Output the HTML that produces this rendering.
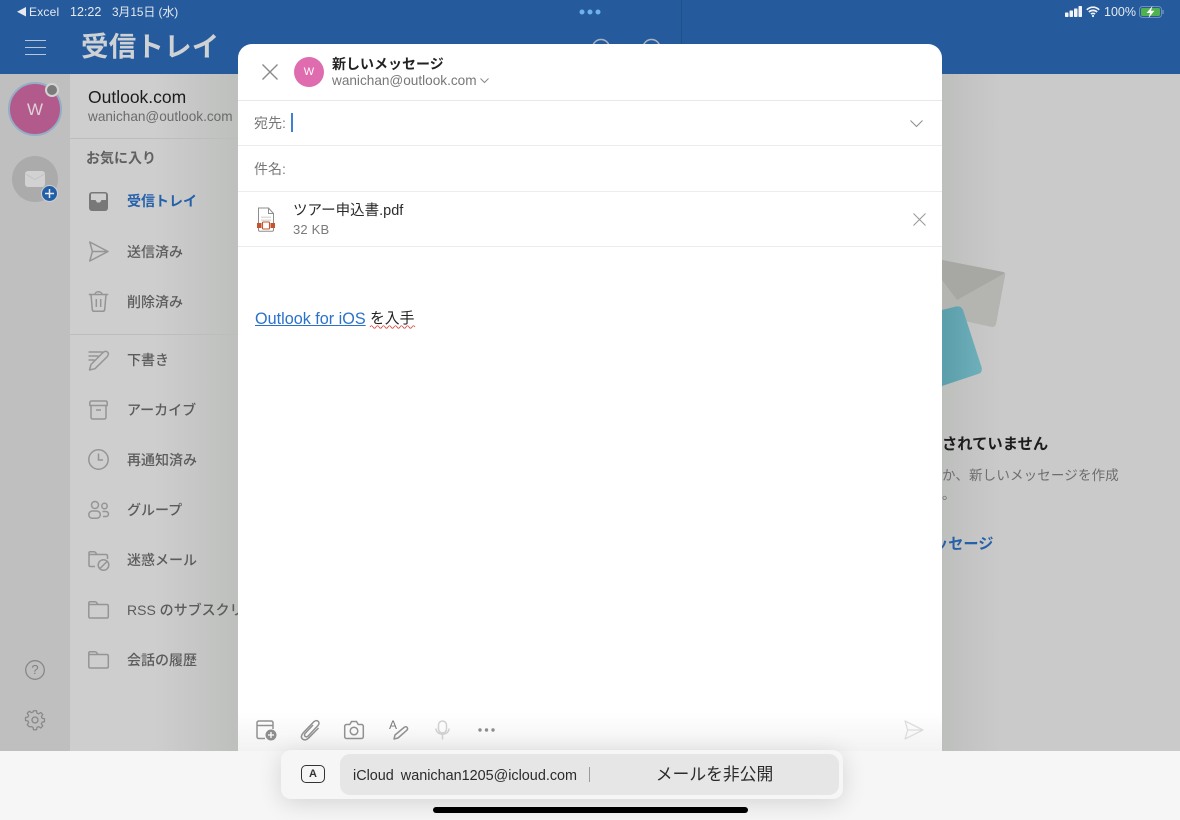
<!DOCTYPE html>
<html lang="ja"><head><meta charset="utf-8"><title>Outlook</title>
<style>
*{box-sizing:border-box}
html,body{margin:0;padding:0}
body{width:1180px;height:820px;position:relative;overflow:hidden;background:#f6f6f6;font-family:"Liberation Sans","Noto Sans CJK JP",sans-serif;color:#222}
.a{position:absolute;white-space:nowrap}
svg{position:absolute;overflow:visible;fill:none}
.nav{position:absolute;left:127px;font-size:14px;line-height:20px;color:#5a5b5a;font-weight:500;white-space:nowrap;width:111px;overflow:hidden}
.ic{stroke:#949594;stroke-width:1.5}
.line{position:absolute;height:1px;background:#ececec;left:238px;width:704px}
.tb{stroke:#919191;stroke-width:1.5}
</style></head><body>
<!-- top blue -->
<div class="a" style="left:0;top:0;width:1180px;height:74px;background:#255b9d"></div>
<div class="a" style="left:681px;top:0;width:1px;height:74px;background:#1f5088"></div>
<svg style="left:17px;top:7px" width="9" height="10"><path d="M9 0v9.500L0 4.750z" fill="#e6e9ee"/></svg>
<div class="a" style="left:29px;top:5px;font-size:12px;line-height:14px;color:#e6e9ee;letter-spacing:.2px">Excel</div>
<div class="a" style="left:70px;top:5px;font-size:12.500px;line-height:14px;color:#e6e9ee">12:22</div>
<div class="a" style="left:112px;top:5px;font-size:11.800px;line-height:14px;color:#e6e9ee">3月15日 (水)</div>
<svg style="left:579px;top:9px" width="22" height="6"><circle cx="3" cy="3" r="2.500" fill="#6fb0ef"/><circle cx="11" cy="3" r="2.500" fill="#6fb0ef"/><circle cx="19" cy="3" r="2.500" fill="#6fb0ef"/></svg>
<!-- status right -->
<svg style="left:1065px;top:6px" width="18" height="12"><rect x="0" y="6.500" width="3.500" height="4.500" rx=".7" fill="#f2f4f7"/><rect x="4.500" y="4.500" width="3.500" height="6.500" rx=".7" fill="#f2f4f7"/><rect x="9" y="2.500" width="3.500" height="8.500" rx=".7" fill="#f2f4f7"/><rect x="13.500" y="0" width="3.500" height="11" rx=".7" fill="#f2f4f7"/></svg>
<svg style="left:1086px;top:6px" width="14" height="11"><path d="M.8 3.800C4.300.3 9.700.3 13.200 3.800M2.900 6c2.300-2.200 5.900-2.200 8.200 0M5 8.100c1.100-1 2.900-1 4 0" stroke="#f2f4f7" stroke-width="1.700"/><circle cx="7" cy="10" r="1.100" fill="#f2f4f7"/></svg>
<div class="a" style="left:1104px;top:5px;font-size:12.500px;line-height:14px;color:#e6e9ee">100%</div>
<svg style="left:1139px;top:6px" width="26" height="12"><rect x=".5" y=".5" width="22" height="11" rx="3" stroke="#6f8fb8"/><rect x="2" y="2" width="19" height="8" rx="1.600" fill="#4fb24f"/><path d="M24 4v4" stroke="#6f8fb8" stroke-width="1.500"/><path d="M13.500 0 7.500 7h3.500L9.500 12l6-7.200H12z" fill="#fff"/></svg>
<!-- header -->
<svg style="left:25px;top:40px" width="21" height="16"><path d="M0 .5h21M0 7.500h21M0 14.500h21" stroke="#b9c6d8" stroke-width="1"/></svg>
<div class="a" style="left:81px;top:29px;font-size:27.500px;line-height:36px;color:#cfd2d4;font-weight:700;letter-spacing:.2px">受信トレイ</div>
<svg style="left:591px;top:38px" width="70" height="10"><circle cx="10" cy="10" r="8.500" stroke="#a8b3c2" stroke-width="1.500"/><circle cx="60.500" cy="10" r="8.500" stroke="#a8b3c2" stroke-width="1.500"/></svg>
<!-- rail -->
<div class="a" style="left:0;top:74px;width:70px;height:677px;background:#bebfbe"></div>
<div class="a" style="left:8px;top:82px;width:54px;height:54px;border-radius:50%;background:#b25a8c;border:2px solid #93aec6"></div>
<div class="a" style="left:8px;top:99px;width:54px;text-align:center;font-size:17px;line-height:22px;color:#ddd2d8">W</div>
<div class="a" style="left:45px;top:83px;width:14px;height:14px;border-radius:50%;background:#7b7b7b;border:2px solid #d3d3d3"></div>
<div class="a" style="left:12px;top:156px;width:46px;height:46px;border-radius:50%;background:#ababab"></div>
<svg style="left:25px;top:171px" width="20" height="16"><rect width="20" height="16" rx="3" fill="#d2d2d2"/><path d="M.5 3 10 8.500 19.500 3" stroke="#c2c2c2" stroke-width="1"/></svg>
<div class="a" style="left:41px;top:185px;width:17px;height:17px;border-radius:50%;background:#235ea8;border:1px solid #cfcfcf"></div>
<svg style="left:44px;top:188px" width="11" height="11"><path d="M5.500 1v9M1 5.500h9" stroke="#e8eaee" stroke-width="1.500"/></svg>
<svg style="left:25px;top:660px" width="20" height="20"><circle cx="10" cy="10" r="9.300" stroke="#888" stroke-width="1.300"/></svg>
<div class="a" style="left:25px;top:660px;width:20px;text-align:center;font-size:13px;line-height:20px;color:#808080">?</div>
<svg style="left:25px;top:710px" width="20" height="20" viewBox="0 0 20 20"><path d="M8.400 1h3.200l.5 2.600 1.700.7 2.200-1.500 2.200 2.200-1.500 2.200.7 1.700 2.600.5v3.200l-2.600.5-.7 1.700 1.500 2.200-2.200 2.200-2.200-1.500-1.700.7-.5 2.600H8.400l-.5-2.600-1.700-.7L4 17.900l-2.200-2.200 1.500-2.200-.7-1.700L0 11.300V8.100l2.600-.5.700-1.700-1.500-2.200L4 1.500l2.200 1.500 1.700-.7z" transform="translate(.5 -.2) scale(.95)" stroke="#888" stroke-width="1.300" stroke-linejoin="round"/><circle cx="10" cy="10" r="3" stroke="#888" stroke-width="1.300"/></svg>
<!-- sidebar -->
<div class="a" style="left:70px;top:74px;width:170px;height:677px;background:linear-gradient(90deg,#cdcecd 0,#cdcecd 50%,#bdbfbd 100%)"></div>
<div class="a" style="left:88px;top:87px;font-size:17.500px;line-height:20px;color:#1c1c1c">Outlook.com</div>
<div class="a" style="left:88px;top:109px;font-size:13.600px;line-height:16px;color:#6a6b6a">wanichan@outlook.com</div>
<div class="a" style="left:70px;top:138px;width:170px;height:1px;background:#bcbdbc"></div>
<div class="a" style="left:86px;top:148px;font-size:14px;line-height:20px;color:#5f605f;font-weight:700">お気に入り</div>
<div class="a" style="left:70px;top:334px;width:170px;height:1px;background:#bcbdbc"></div>
<div class="nav" style="top:191px;color:#2560ab;font-weight:700">受信トレイ</div>
<div class="nav" style="top:242px">送信済み</div>
<div class="nav" style="top:292px">削除済み</div>
<div class="nav" style="top:350px">下書き</div>
<div class="nav" style="top:400px">アーカイブ</div>
<div class="nav" style="top:450px">再通知済み</div>
<div class="nav" style="top:500px">グループ</div>
<div class="nav" style="top:550px">迷惑メール</div>
<div class="nav" style="top:600px">RSS のサブスクリプション</div>
<div class="nav" style="top:650px">会話の履歴</div>
<!-- nav icons -->
<svg style="left:89px;top:192px" width="19" height="19"><rect width="19" height="19" rx="3" fill="#777877"/><path d="M2 2.500a1 1 0 0 1 1-1h13a1 1 0 0 1 1 1V8h-4.500l-1.500 2.500H8L6.500 8H2z" fill="#cdcecd"/></svg>
<svg style="left:88px;top:241px" width="21" height="21"><path d="M1.800 1 20 10.500 1.800 20l2.600-9.500zM4.400 10.500H20" class="ic" stroke-linejoin="round"/></svg>
<svg style="left:88px;top:291px" width="21" height="21"><path d="M.8 3.500h19.500M7 3.500c0-3.600 7-3.600 7 0M3 3.500l1.300 15c.1 1.100.8 1.800 1.900 1.800h8.600c1.100 0 1.800-.7 1.900-1.800l1.300-15M8.300 8v8M12.700 8v8" class="ic"/></svg>
<svg style="left:88px;top:350px" width="21" height="21"><path d="M.5 2h14M.5 6h10M.5 10h6M1.500 20l1.500-5.500L14.500 3c1.500-1.700 3.700-2.200 5-1 1.400 1.300.9 3.500-.6 5L7 18.700z" class="ic" stroke-linejoin="round"/></svg>
<svg style="left:89px;top:400px" width="19" height="20"><path d="M2.500 1h14c1 0 1.700.7 1.700 1.700v2.800H.8V2.700C.8 1.700 1.500 1 2.500 1zM2 5.500V17c0 1.200.8 2 2 2h11c1.200 0 2-.8 2-2V5.500M7 10h5" class="ic" stroke-linejoin="round"/></svg>
<svg style="left:88px;top:449px" width="21" height="21"><circle cx="10.500" cy="10.500" r="9.700" class="ic"/><path d="M10.500 4.500v6.500h4.500" class="ic"/></svg>
<svg style="left:88px;top:501px" width="21" height="18"><circle cx="7" cy="4" r="3.500" class="ic"/><circle cx="16.500" cy="5" r="2.700" class="ic"/><rect x=".8" y="10" width="11.500" height="7.300" rx="3.600" class="ic"/><path d="M14.500 10.500h3.500c3.200 0 3.200 5 0 5h-3" class="ic"/></svg>
<svg style="left:88px;top:551px" width="22" height="20"><path d="M7 15.500H2.500C1.500 15.500 1 15 1 14V2C1 1.200 1.500.8 2.300.8H6c.7 0 1 .2 1.500.7L9 3.500h9c1 0 1.500.5 1.500 1.500v3M1 3.500h8" class="ic"/><circle cx="15.500" cy="14" r="5.300" class="ic"/><path d="M12 17.500l7-7" class="ic"/></svg>
<svg style="left:88px;top:601px" width="21" height="18"><path d="M2.300.8H7c.7 0 1 .2 1.500.7L10 3.500h8.800c1 0 1.500.5 1.500 1.500v10.500c0 1-.5 1.500-1.500 1.500H2.300c-1 0-1.500-.5-1.500-1.500V2C.8 1.200 1.500.8 2.300.8zM.8 3.500H10" class="ic"/></svg>
<svg style="left:88px;top:651px" width="21" height="18"><path d="M2.300.8H7c.7 0 1 .2 1.500.7L10 3.500h8.800c1 0 1.500.5 1.500 1.500v10.500c0 1-.5 1.500-1.500 1.500H2.300c-1 0-1.500-.5-1.500-1.500V2C.8 1.200 1.500.8 2.300.8zM.8 3.500H10" class="ic"/></svg>
<!-- right pane -->
<div class="a" style="left:942px;top:74px;width:238px;height:677px;background:linear-gradient(90deg,#bdbfbd 0,#cacaca 60px,#cacaca 100%)"></div>
<svg style="left:942px;top:255px" width="70" height="140">
<defs><linearGradient id="t" x1="0" y1="0" x2="1" y2="0"><stop offset="0" stop-color="#5a9ea9"/><stop offset="1" stop-color="#6eafba"/></linearGradient></defs>
<path d="M0 5 61 17q3 1 2 4L54 69q-1 3-4 3L0 61z" fill="#b4b4b1"/><path d="M0 5 61 17q1 0 2 1L15 45 0 25z" fill="#a7a7a3"/><path d="M0 55 14 51.500Q19 50.500 21 55L39.500 112Q41 117.500 36 119L0 131z" fill="url(#t)"/></svg>
<div class="a" style="left:942px;top:434px;font-size:15.300px;line-height:21px;font-weight:700;color:#1c1c1c">されていません</div>
<div class="a" style="left:942px;top:466px;font-size:13.500px;line-height:20px;color:#6e6e6e;letter-spacing:.15px">か、新しいメッセージを作成</div>
<div class="a" style="left:942px;top:485px;font-size:13.500px;line-height:20px;color:#6e6e6e">。</div>
<div class="a" style="left:942px;top:534px;width:60px;font-size:15.200px;line-height:22px;font-weight:700;color:#2560a8;overflow:hidden"><span style="margin-left:-9px">ッセージ</span></div>
<!-- bottom -->
<div class="a" style="left:0;top:751px;width:1180px;height:69px;background:#f6f6f6"></div>
<!-- compose -->
<div class="a" style="left:238px;top:44px;width:704px;height:707px;background:#fff;border-radius:14px 14px 0 0"></div>
<div class="a" style="left:238px;top:712px;width:704px;height:39px;background:linear-gradient(180deg,#fff 0,#f2f2f2 100%)"></div>
<svg style="left:262px;top:64px" width="16" height="16"><path d="M.5.500l15 15M15.500.500l-15 15" stroke="#8a8a8a" stroke-width="1.400"/></svg>
<div class="a" style="left:294px;top:57px;width:30px;height:30px;border-radius:50%;background:#df6cae;color:#fff;text-align:center;font-size:11px;line-height:30px">W</div>
<div class="a" style="left:332px;top:55px;font-size:14px;line-height:18px;font-weight:700;color:#222">新しいメッセージ</div>
<div class="a" style="left:332px;top:73px;font-size:13.600px;line-height:16px;color:#777">wanichan@outlook.com</div>
<svg style="left:480px;top:78px" width="9" height="6"><path d="M.5.500 4.500 4.500 8.500.500" stroke="#888" stroke-width="1"/></svg>
<div class="line" style="top:100px;background:#e8e8e8"></div>
<div class="a" style="left:254px;top:113px;font-size:14px;line-height:20px;color:#777">宛先:</div>
<div class="a" style="left:291px;top:113px;width:2px;height:19px;background:#3f7fd4"></div>
<svg style="left:909.500px;top:120px" width="13" height="8"><path d="M.5.500 6.500 6.500 12.500.500" stroke="#8c8c8c" stroke-width="1"/></svg>
<div class="line" style="top:145px"></div>
<div class="a" style="left:254px;top:159px;font-size:14px;line-height:20px;color:#777">件名:</div>
<div class="line" style="top:191px"></div>
<svg style="left:256px;top:207px" width="20" height="25"><path d="M2.500 1h10l5 5.500V23c0 .7-.5 1.200-1.200 1.200H3.700C3 24.200 2.500 23.700 2.500 23z" stroke="#8e8e8e" stroke-width="1" fill="#fff"/><path d="M12.500 1v5.500h5" stroke="#8e8e8e" stroke-width="1"/><path d="M5 9.500h10V11H5zM5 12.500h10V14H5z" fill="#ddd"/><rect x="1" y="16" width="4.500" height="5" fill="#c4532e"/><rect x="14.500" y="16" width="4.500" height="5" fill="#c4532e"/><rect x="6.500" y="15" width="7" height="7" rx=".7" stroke="#c4532e" stroke-width="1.100" fill="#fff"/></svg>
<div class="a" style="left:293px;top:201px;font-size:14.500px;line-height:20px;color:#2b2b2b">ツアー申込書.pdf</div>
<div class="a" style="left:293px;top:222px;font-size:13px;line-height:16px;color:#7a7a7a;letter-spacing:.2px">32 KB</div>
<svg style="left:913px;top:213px" width="13" height="13"><path d="M.5.500l12 12M12.500.500l-12 12" stroke="#9a9a9a" stroke-width="1.100"/></svg>
<div class="line" style="top:246px"></div>
<div class="a" style="left:255px;top:309px;font-size:16.200px;line-height:20px;color:#2a72c9;text-decoration:underline">Outlook for iOS</div>
<div class="a" style="left:370px;top:309px;font-size:14.800px;line-height:20px;color:#222">を入手</div>
<svg style="left:370px;top:325px" width="45" height="4"><path d="M0 2q1.500-2.500 3 0t3 0 3 0 3 0 3 0 3 0 3 0 3 0 3 0 3 0 3 0 3 0 3 0 3 0 3 0" stroke="#d8433f" stroke-width=".8"/></svg>
<!-- toolbar -->
<svg style="left:256px;top:720px" width="22" height="21"><path d="M9 18.500H3c-1.300 0-2-.7-2-2V3c0-1.300.7-2 2-2h12c1.300 0 2 .7 2 2v6M1 5.500h16" class="tb"/><circle cx="15" cy="15" r="5.500" fill="#8d8d8d"/><path d="M15 12v6M12 15h6" stroke="#fff" stroke-width="1.300"/></svg>
<svg style="left:300px;top:720px" width="21" height="21"><path d="M13 5 5 13.500c-1 1.200-.5 2.500.3 3 .9.6 2 .3 2.700-.4L18 5.500c1.500-1.700 1.200-3.500 0-4.300-1.200-.9-3-.7-4.300.7L3.500 12.500c-2.500 2.700-2.700 5-1 6.500 1.700 1.400 4.200 1 6.300-1.200L18.500 8" class="tb"/></svg>
<svg style="left:344px;top:720px" width="20" height="20"><path d="M2.500 4.500h3.300L7.500 1.500h5l1.700 3h3.300c1 0 1.800.8 1.800 1.800v10.400c0 1-.8 1.800-1.800 1.800h-15C1.500 18.500.7 17.700.7 16.700V6.300c0-1 .8-1.800 1.800-1.800z" class="tb" stroke-linejoin="round"/><circle cx="10" cy="11" r="3.800" class="tb"/></svg>
<div class="a" style="left:389px;top:718px;font-size:12px;line-height:14px;color:#777">A</div>
<svg style="left:389px;top:720px" width="20" height="20"><path d="M5 19l1-4L15 7.500c1-1 2.500-1 3.200 0 .6.900.5 1.800-.3 2.700L9 18z" class="tb" stroke-linejoin="round"/></svg>
<svg style="left:435px;top:720px" width="15" height="20"><rect x="3.500" y="1" width="8" height="12" rx="4" stroke="#d0d0d0" stroke-width="1.500"/><path d="M1 8.500c0 7.500 13 7.500 13 0M7.500 14.500V19.500" stroke="#d0d0d0" stroke-width="1.500"/></svg>
<svg style="left:478px;top:728px" width="17" height="4"><circle cx="2" cy="2" r="1.700" fill="#8d8d8d"/><circle cx="8.500" cy="2" r="1.700" fill="#8d8d8d"/><circle cx="15" cy="2" r="1.700" fill="#8d8d8d"/></svg>
<svg style="left:904px;top:720px" width="20" height="20"><path d="M1 1 19 10 1 19l2.700-9zM3.700 10H19" stroke="#dcdcdc" stroke-width="1.300" stroke-linejoin="round"/></svg>
<!-- suggestion bar -->
<div class="a" style="left:281px;top:750px;width:562px;height:49px;border-radius:10px;background:#f6f6f6;box-shadow:0 4px 24px rgba(0,0,0,.14)"></div>
<div class="a" style="left:340px;top:754px;width:499px;height:41px;border-radius:10px;background:#e6e6e6"></div>
<div class="a" style="left:301px;top:765px;width:24px;height:18px;border:1.500px solid #333;border-radius:5px;font-size:11px;line-height:16px;text-align:center;color:#333;font-weight:700">A</div>
<div class="a" style="left:353px;top:767px;font-size:14.400px;line-height:18px;color:#2b2b2b;word-spacing:3px">iCloud wanichan1205@icloud.com</div>
<div class="a" style="left:589px;top:767px;width:1px;height:15px;background:#9a9a9a"></div>
<div class="a" style="left:590px;top:764px;width:249px;text-align:center;font-size:16.800px;line-height:21px;color:#2b2b2b">メールを非公開</div>
<div class="a" style="left:433px;top:807px;width:315px;height:6px;border-radius:3px;background:#000"></div>
</body></html>
